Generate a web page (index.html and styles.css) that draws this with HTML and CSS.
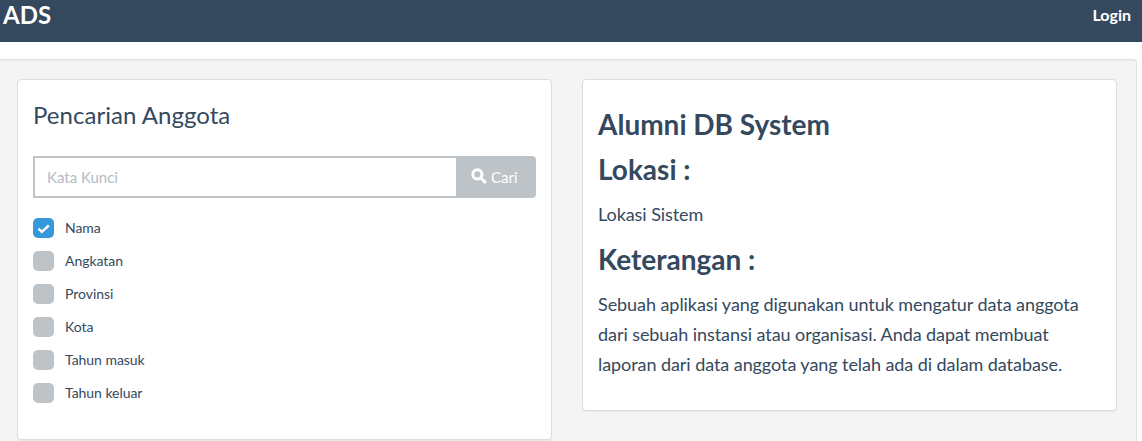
FILE: index.html
```html
<!DOCTYPE html>
<html lang="id">
<head>
<meta charset="utf-8">
<title>ADS</title>
<link rel="stylesheet" href="styles.css">
</head>
<body>
<header class="navbar"><a class="brand">ADS</a><a class="login">Login</a></header>
<main class="well">
  <section class="panel search">
    <h2 class="panel-title">Pencarian Anggota</h2>
    <form class="search-group">
      <input class="search-input" type="text" placeholder="Kata Kunci">
      <button class="search-button" type="button"><svg class="search-icon" viewBox="0 0 16 16"><circle cx="6" cy="6" r="4.3"/><path d="M9.4 9.4L14 14"/></svg>Cari</button>
    </form>
    <ul class="options">
      <li class="option"><span class="box checked"><svg viewBox="0 0 21 20"><path d="M5.5 10.6l3.3 3.2 7-6.3"/></svg></span>Nama</li>
      <li class="option"><span class="box"></span>Angkatan</li>
      <li class="option"><span class="box"></span>Provinsi</li>
      <li class="option"><span class="box"></span>Kota</li>
      <li class="option"><span class="box"></span>Tahun masuk</li>
      <li class="option"><span class="box"></span>Tahun keluar</li>
    </ul>
  </section>
  <section class="panel about">
    <h1 class="heading">Alumni DB System</h1>
    <h1 class="heading">Lokasi :</h1>
    <p class="text">Lokasi Sistem</p>
    <h1 class="heading">Keterangan :</h1>
    <p class="text">Sebuah aplikasi yang digunakan untuk mengatur data anggota dari sebuah instansi atau organisasi. Anda dapat membuat laporan dari data anggota yang telah ada di dalam database.</p>
  </section>
</main>
</body>
</html>
```
FILE: styles.css
```css
* { box-sizing: border-box; }
body { margin: 0; background: #fff; color: #34495e; font-family: Lato, sans-serif; font-size: 18px; }
.navbar { display: flex; justify-content: space-between; height: 42px; padding: 0 11px 0 3px; background: #34495e; color: #fff; font-weight: 700; }
.brand { font-size: 24px; line-height: 30px; }
.login { font-size: 16px; line-height: 30px; }
.well { display: flex; align-items: flex-start; gap: 30px; width: 1139px; height: 382px; margin: 17px 0 0 -2px; padding: 19px 18px 0; background: #f4f4f4; border: 1px solid #e0e0e0; border-bottom: 0; border-radius: 4px 4px 0 0; box-shadow: inset 0 1px 1px rgba(0,0,0,.05); }
.panel { flex: none; width: 535px; padding: 14px 15px; background: #fff; border: 1px solid #ddd; border-radius: 4px; box-shadow: 0 1px 1px rgba(0,0,0,.05); }
.search { height: 361px; }
.about { height: 332px; }
.panel-title { margin: 7px 0 27px; font-size: 24px; font-weight: 400; line-height: 28px; letter-spacing: .04px; }
.search-group { display: flex; height: 42px; margin: 0; }
.search-input { width: 423px; height: 42px; padding: 0 12px; border: 2px solid #bdc3c7; border-right: 0; border-radius: 0; background: #fff; color: #34495e; font: 15px Lato, sans-serif; }
.search-input::placeholder { color: #b2bcc5; opacity: 1; }
.search-button { display: flex; align-items: center; gap: 3px; width: 80px; height: 42px; padding: 0 0 1px 15px; border: 0; border-radius: 0 4px 4px 0; background: #bdc3c7; color: #fff; font: 15px Lato, sans-serif; }
.search-icon { width: 17px; height: 17px; fill: none; stroke: #fff; stroke-width: 2.8; }
.options { margin: 19px 0 0; padding: 0; list-style: none; }
.option { display: flex; align-items: center; gap: 11px; height: 21px; margin-bottom: 12px; font-size: 14px; line-height: 21px; letter-spacing: -.04px; }
.box { width: 21px; height: 20px; position: relative; top: .5px; border-radius: 5px; background: #bdc3c7; }
.checked { background: #3498db; }
.box svg { display: block; fill: none; stroke: #fff; stroke-width: 2.4; }
.heading { margin: 15px 0; font-size: 28px; line-height: 30px; font-weight: 700; }
.text { margin: 0; font-size: 18px; line-height: 30px; letter-spacing: -.065px; }
```
